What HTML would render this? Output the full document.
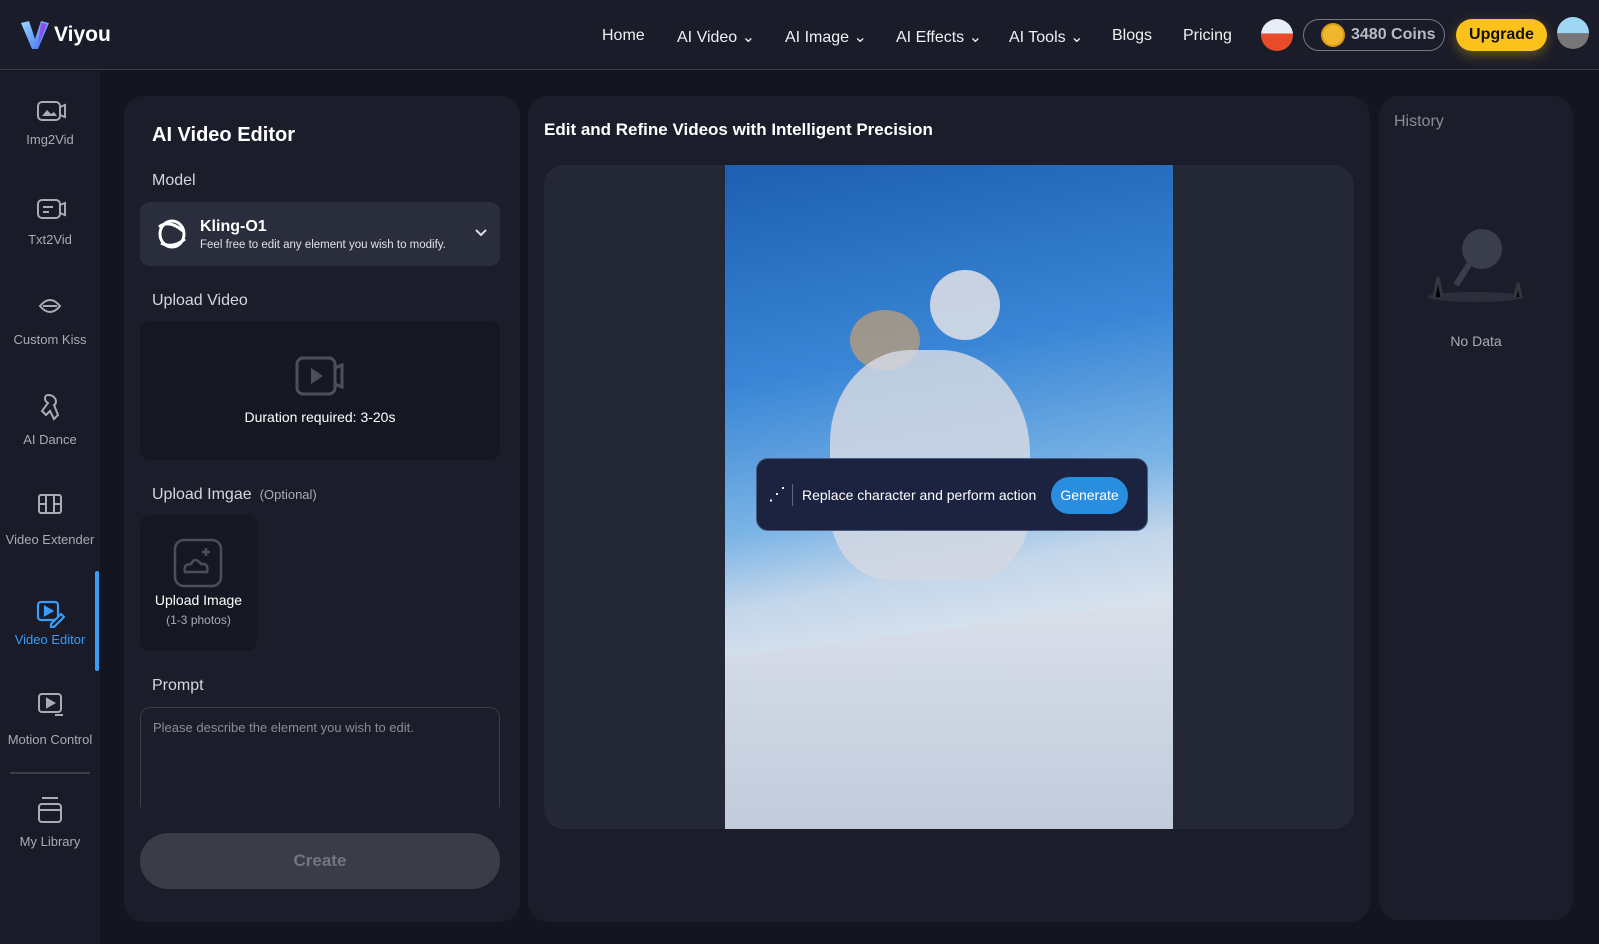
<!DOCTYPE html>
<html><head><meta charset="utf-8"><style>
*{box-sizing:border-box;margin:0;padding:0}
body{width:1599px;height:944px;background:#131520;font-family:"Liberation Sans",sans-serif;color:#e8e9ee;position:relative;overflow:hidden}
.abs{position:absolute}
.hdr{left:0;top:0;width:1599px;height:70px;background:#1a1c29;border-bottom:1px solid #3a3c48}
.nav{top:27px;font-size:16px;color:#f0f0f3}
.side{left:0;top:71px;width:100px;height:873px;background:#191b28}
.si{left:0;width:100px;text-align:center;font-size:13px;color:#a9abb6}
.panel{background:#1b1d2b;border-radius:20px}
.lbl{font-size:16px;color:#d6d7dd}
</style></head><body>
<div class="abs hdr"></div>
<svg class="abs" style="left:19px;top:19px" width="32" height="32" viewBox="0 0 32 32"><defs><linearGradient id="g" x1="0" y1="0" x2="1" y2="1"><stop offset="0" stop-color="#9fd7ff"/><stop offset="1" stop-color="#3a6df0"/></linearGradient></defs><path d="M2 4 L10 2 L16 20 L22 2 L30 4 L19 30 L13 30 Z" fill="url(#g)"/><path d="M22 4 L28 5 L19 26 Z" fill="#8b4cf0"/></svg>
<div class="abs" style="left:54px;top:23px;font-size:21px;font-weight:bold;color:#fff">Viyou</div>
<div class="abs nav" style="left:602px">Home</div>
<div class="abs nav" style="left:677px">AI Video ⌄</div>
<div class="abs nav" style="left:785px">AI Image ⌄</div>
<div class="abs nav" style="left:896px">AI Effects ⌄</div>
<div class="abs nav" style="left:1009px">AI Tools ⌄</div>
<div class="abs nav" style="left:1112px">Blogs</div>
<div class="abs nav" style="left:1183px">Pricing</div>
<div class="abs" style="left:1261px;top:19px;width:32px;height:32px;border-radius:50%;background:linear-gradient(#e8eef8 45%,#e84a2a 46%)"></div>
<div class="abs" style="left:1303px;top:19px;width:142px;height:32px;border:1px solid #777985;border-radius:16px"></div>
<div class="abs" style="left:1321px;top:23px;width:24px;height:24px;border-radius:50%;background:#f0b62e;border:2px solid #d99a1a"></div>
<div class="abs" style="left:1351px;top:26px;font-size:16px;color:#b8bac4;font-weight:bold">3480 Coins</div>
<div class="abs" style="left:1456px;top:19px;width:91px;height:32px;border-radius:16px;background:#fbc21b;color:#111;font-size:16px;font-weight:bold;text-align:center;line-height:32px;box-shadow:0 4px 12px rgba(251,194,27,.35)">Upgrade</div>
<div class="abs" style="left:1557px;top:17px;width:32px;height:32px;border-radius:50%;background:linear-gradient(#9fd6f2 50%,#777 51%)"></div>

<div class="abs side"></div>
<div class="abs" style="left:95px;top:571px;width:4px;height:100px;background:#3a9cf5;border-radius:2px"></div>
<div class="abs" style="left:10px;top:772px;width:80px;height:2px;background:#3a3c48"></div>
<svg class="abs" width="100" height="800" style="left:0;top:90px" fill="none" stroke="#a9abb6" stroke-width="2">
<rect x="38" y="12" width="22" height="18" rx="4"/><path d="M60 17 l5 -2 v12 l-5 -2"/><path d="M42 26 l5 -6 4 4 3 -2 3 4z" fill="#a9abb6" stroke="none"/>
<rect x="38" y="110" width="22" height="18" rx="4"/><path d="M60 115 l5 -2 v12 l-5 -2 M43 117 h10 M43 122 h6"/>
<path d="M40 216 q10 -12 20 0 q-10 12 -20 0z M43 216 h14"/>
<path d="M48 305 c-4 0 -4 6 0 8 l-6 8 l4 4 l4 -4 l4 8 l4 -4 l-4 -10 c4 -2 2 -10 -6 -10z"/>
<rect x="39" y="405" width="22" height="18" rx="2"/><path d="M46 405 v18 M54 405 v18 M39 414 h7 M54 414 h7"/>
<rect x="39" y="604" width="22" height="18" rx="3"/><path d="M47 609 l7 4 -7 4z" fill="#a9abb6"/><path d="M55 625 h8"/>
<rect x="39" y="714" width="22" height="18" rx="3"/><path d="M39 720 h22 M42 708 h16"/>
</svg>
<svg class="abs" width="30" height="30" style="left:35px;top:598px" fill="none" stroke="#3a9cf5" stroke-width="2.2"><rect x="3" y="4" width="20" height="18" rx="3"/><path d="M10 9 l7 4 -7 4z" fill="#3a9cf5"/><path d="M16 26 l10 -10 3 3 -10 10 h-3z" fill="#191b28"/></svg>
<div class="abs si" style="top:132px">Img2Vid</div>
<div class="abs si" style="top:232px">Txt2Vid</div>
<div class="abs si" style="top:332px">Custom Kiss</div>
<div class="abs si" style="top:432px">AI Dance</div>
<div class="abs si" style="top:532px">Video Extender</div>
<div class="abs si" style="top:632px;color:#3a9cf5">Video Editor</div>
<div class="abs si" style="top:732px">Motion Control</div>
<div class="abs si" style="top:834px">My Library</div>

<div class="abs panel" style="left:124px;top:96px;width:396px;height:826px"></div>
<div class="abs" style="left:152px;top:124px;font-size:20px;font-weight:bold;color:#fff">AI Video Editor</div>
<div class="abs lbl" style="left:152px;top:172px">Model</div>
<div class="abs" style="left:140px;top:202px;width:360px;height:64px;background:#2a2d3b;border-radius:10px"></div>
<svg class="abs" style="left:155px;top:217px" width="34" height="34" fill="none" stroke="#fff" stroke-width="3"><ellipse cx="17" cy="17" rx="12" ry="13"/><path d="M4 10 q10 -8 24 4 M6 26 q12 6 24 -4"/></svg>
<div class="abs" style="left:200px;top:218px;font-size:16px;font-weight:bold;color:#fff">Kling-O1</div>
<div class="abs" style="left:200px;top:239px;font-size:11.5px;color:#e0e1e6">Feel free to edit any element you wish to modify.</div>
<svg class="abs" style="left:474px;top:228px" width="14" height="10" fill="none" stroke="#ddd" stroke-width="2"><path d="M2 2 l5 5 5 -5"/></svg>
<div class="abs lbl" style="left:152px;top:292px">Upload Video</div>
<div class="abs" style="left:140px;top:321px;width:360px;height:139px;background:#151722;border-radius:10px"></div>
<svg class="abs" style="left:295px;top:356px" width="50" height="42" fill="none" stroke="#4c4e5a" stroke-width="3"><rect x="2" y="2" width="38" height="36" rx="6"/><path d="M40 12 l7 -3 v22 l-7 -3"/><path d="M16 12 l12 8 -12 8z" fill="#4c4e5a" stroke="none"/></svg>
<div class="abs" style="left:140px;top:409px;width:360px;text-align:center;font-size:14px;color:#fff">Duration required: 3-20s</div>
<div class="abs lbl" style="left:152px;top:486px">Upload Imgae <span style="font-size:13px;color:#a9abb6">&nbsp;(Optional)</span></div>
<div class="abs" style="left:140px;top:515px;width:117px;height:136px;background:#151722;border-radius:10px"></div>
<svg class="abs" style="left:173px;top:538px" width="50" height="50" fill="none" stroke="#4c4e5a" stroke-width="2.5"><rect x="2" y="2" width="46" height="46" rx="9"/><path d="M12 34 q-2 -8 6 -8 q4 -8 10 0 q8 -1 6 8z M33 10 v8 M29 14 h8"/></svg>
<div class="abs" style="left:140px;top:592px;width:117px;text-align:center;font-size:14px;color:#fff">Upload Image</div>
<div class="abs" style="left:140px;top:613px;width:117px;text-align:center;font-size:12px;color:#a9abb6">(1-3 photos)</div>
<div class="abs lbl" style="left:152px;top:677px">Prompt</div>
<div class="abs" style="left:140px;top:707px;width:360px;height:100px;border:1px solid #3a3c48;border-bottom:none;border-radius:10px 10px 0 0"></div>
<div class="abs" style="left:153px;top:720px;font-size:13px;color:#8a8c96">Please describe the element you wish to edit.</div>
<div class="abs" style="left:140px;top:833px;width:360px;height:56px;border-radius:28px;background:#3a3c48;text-align:center;line-height:56px;font-size:17px;font-weight:bold;color:#73757f">Create</div>

<div class="abs panel" style="left:528px;top:96px;width:842px;height:826px"></div>
<div class="abs" style="left:544px;top:120px;font-size:17px;font-weight:bold;color:#fff">Edit and Refine Videos with Intelligent Precision</div>
<div class="abs" style="left:544px;top:165px;width:810px;height:664px;background:#242736;border-radius:20px"></div>
<div class="abs" style="left:725px;top:165px;width:448px;height:664px;background:linear-gradient(170deg,#1d5fb0 0%,#3a86d6 30%,#7ab4e6 50%,#c3d6ea 60%,#dfe6ef 72%,#c9d3e2 100%)"></div>
<div class="abs" style="left:930px;top:270px;width:70px;height:70px;border-radius:50%;background:#d8dce4;opacity:.9"></div>
<div class="abs" style="left:850px;top:310px;width:70px;height:60px;border-radius:50%;background:#c9a070;opacity:.7"></div>
<div class="abs" style="left:830px;top:350px;width:200px;height:230px;border-radius:40% 45% 30% 30%;background:#d3d8e2;opacity:.85"></div>
<div class="abs" style="left:725px;top:600px;width:448px;height:229px;background:linear-gradient(#d9e0ea,#c1cbdb);clip-path:polygon(0 25%,100% 0,100% 100%,0 100%)"></div>
<div class="abs" style="left:756px;top:458px;width:392px;height:73px;border-radius:12px;background:#1b2340;border:1px solid #4a5a80"></div>
<div class="abs" style="left:768px;top:484px;font-size:18px;color:#fff">⋰</div>
<div class="abs" style="left:792px;top:484px;width:1px;height:22px;background:#667"></div>
<div class="abs" style="left:802px;top:487px;font-size:14px;color:#fff">Replace character and perform action</div>
<div class="abs" style="left:1051px;top:477px;width:77px;height:37px;border-radius:19px;background:#2a8ee0;text-align:center;line-height:37px;font-size:14px;color:#fff">Generate</div>

<div class="abs panel" style="left:1379px;top:96px;width:194px;height:824px"></div>
<div class="abs" style="left:1394px;top:113px;font-size:16px;color:#8a8c96">History</div>
<svg class="abs" style="left:1420px;top:225px" width="110" height="80"><ellipse cx="55" cy="72" rx="48" ry="5" fill="#2c2f3b"/><circle cx="62" cy="24" r="20" fill="#3a3d4a"/><path d="M50 38 l-14 22" stroke="#3a3d4a" stroke-width="6"/><path d="M14 72 l4 -20 4 20 M95 72 l3 -14 3 14" stroke="#33363f" stroke-width="3"/></svg>
<div class="abs" style="left:1379px;top:333px;width:194px;text-align:center;font-size:14px;color:#a9abb6">No Data</div>
</body></html>
